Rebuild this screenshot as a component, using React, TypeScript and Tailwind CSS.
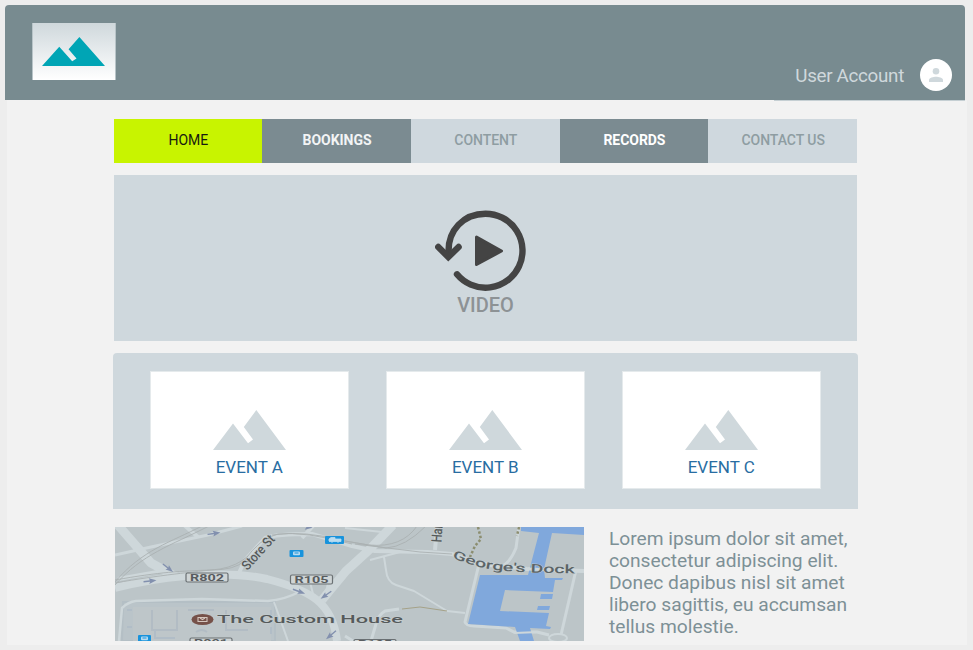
import React from "react";

function Mountains({ className, fill }: { className: string; fill: string }) {
  return (
    <svg viewBox="0 0 73 40" preserveAspectRatio="none" className={className} fill={fill}>
      <path d="M0 40 L20 13.5 L35 33.3 L40 29.5 L30.8 17 L43.3 0 L73 40 Z" />
    </svg>
  );
}

function VideoIcon() {
  return (
    <svg viewBox="435 210 91 82" className="h-[82px] w-[91px]" fill="none" stroke="#444444" strokeWidth="6.4" strokeLinecap="round">
      <path d="M448.7 254 C447 230 464 213.7 485.5 213.7 A37 37 0 1 1 457 274.3" />
      <path d="M438.3 247 L448.3 257 L458.6 247" strokeLinejoin="miter" />
      <path d="M476.5 237 L501.5 251 L476.5 264.5 Z" fill="#444444" strokeWidth="3" strokeLinejoin="round" />
    </svg>
  );
}

function Shield({ x, y, label }: { x: number; y: number; label: string }) {
  return (
    <g>
      <rect x={x} y={y} width="42" height="9" rx="1.5" fill="#cfd5d6" stroke="#6a7073" strokeWidth="1.2" />
      <text x={x + 21} y={y + 7.6} textAnchor="middle" textLength="34" lengthAdjust="spacingAndGlyphs" fontSize="8.6" fontWeight="700" fill="#585c5f">
        {label}
      </text>
    </g>
  );
}

function Stop({ x, y, w }: { x: number; y: number; w: number }) {
  return (
    <g>
      <rect x={x} y={y} width={w} height="7" rx="1" fill="#1893dc" />
      <rect x={x + w / 2 - 3.5} y={y + 1.5} width="7" height="3.7" rx="1" fill="#b9dcf0" />
      <path d={`M${x + w / 2 - 2} ${y + 3} h4`} stroke="#1893dc" strokeWidth="1" />
    </g>
  );
}

function Arrow({ x, y, angle }: { x: number; y: number; angle: number }) {
  return (
    <path
      transform={`translate(${x} ${y}) rotate(${angle})`}
      d="M-6.5 -0.7 L0 -0.7 L-1 -2.8 L6.5 0 L-1 2.8 L0 0.7 L-6.5 0.7 Z"
      fill="#8290ae"
    />
  );
}

function StreetMap() {
  return (
    <svg viewBox="115 527 469 114" className="h-[114px] w-[469px] shrink-0 overflow-hidden" fontFamily="Roboto, sans-serif">
      <rect x="115" y="527" width="469" height="114" fill="#bcc5c8" />

      {/* Custom House grounds */}
      <path d="M122 641 L123 602 L275 602 L275 641 Z" fill="#bac4c9" stroke="#b4bfc5" strokeWidth="2" />
      <path d="M133 607 H271 V641 H133 Z" fill="#bec6c9" />
      <path d="M152 610 V630 H177 V610 M226 610 V630 H248 M188 610 H214 M196 632 Q202 628 207 632" fill="none" stroke="#b2bcc4" strokeWidth="2" />
      <path d="M127 610 H132 M127 627 H132 M271 610 V617 M271 627 V634 M155 630 V638 H175" fill="none" stroke="#b1bdc7" strokeWidth="2" />

      {/* Streets */}
      <g fill="none" stroke="#ced7da" strokeLinejoin="round">
        <path d="M115 588 C142 581 160 578 185 576 C220 573 245 574 267 579 Q302 588 317 600 Q334 614 337 641" strokeWidth="8" />
        <path d="M117 524 L151 563 Q164 570 176 577" strokeWidth="9" />
        <path d="M322 600 L346 571 L368 551 L393 525" strokeWidth="9" />
        <path d="M115 555 L151 547 L208 535 L242 526" strokeWidth="3" />
        <path d="M118 579 L163 571 M184 525 L198 537" strokeWidth="4" />
        <path d="M238 575 L245 560 L265 538 Q276 534 312 534 L352 546 L375 551 L427 552 L452 554 L478 563 L527 569 L584 571" strokeWidth="4" />
        <path d="M302 538 L313 526 M435 550 L437 526" strokeWidth="4" />
        <path d="M119 641 L122 608 Q128 602 136 601 L202 599 L268 601 Q284 600 301 591" strokeWidth="2.5" />
        <path d="M274 602 L288 641 M310 582 L313 594 M328 583 L325 597" strokeWidth="2" />
        <path d="M370 560 L400 552 M384 557 L386 570 Q387 582 396 585 L414 591 L447 611 L465 613 M345 528 L382 532" strokeWidth="2" />
        <path d="M399 609 L385 611 Q378 615 376 624 L371 641 M345 636 L353 641" strokeWidth="3" />
        <path d="M519 526 L516 548 Q510 563 501 567 L479 564 L465 622 Q466 626 474 626 L506 628 L514 632 L537 632 L549 635" strokeWidth="3" />
        <path d="M576 570 L561 635" strokeWidth="3" />
        <ellipse cx="558" cy="638" rx="9" ry="4" strokeWidth="2" />
      </g>

      {/* Rail lines */}
      <g fill="none" stroke="#aab1b2" strokeWidth="0.9">
        <path d="M115 582 C142 550 171 542 202 526" />
        <path d="M115 585 C142 554 170 546 209 526" />
        <path d="M115 580 C160 572 181 571 211 570 Q235 570 244 561 Q260 538 278 534 Q304 531 352 544" />
        <path d="M115 583 C160 575 193 572 220 569 Q237 566 248 556" />
        <path d="M272 535 Q304 530 345 541 L386 548 Q405 547 426 526" />
        <path d="M345 541 L369 545 Q402 548 417 526 M355 544 L420 552 L452 554" />
      </g>

      {/* Docks */}
      <g fill="#80a8dc">
        <path d="M521 527 H584 V535 L552 533 L544 569 L545 578 L563 578 L562 580 H555 L553 592 L505 590 L500 611 L549 613 L546 626 L551 627 L550 629 L530 628 L534 641 H520 L515 627 L468 624 L480 575 L528 575 L539 533 L521 531 Z" />
        <path d="M541 594 H553 L552 599 H540 Z M538 606 H550 L549 610 H537 Z" />
      </g>
      <path d="M528 569 L584 571" stroke="#ced7da" strokeWidth="3" />
      <path d="M508 629 L515 633 L538 632" fill="none" stroke="#ced7da" strokeWidth="2" />

      {/* Footpaths */}
      <path d="M478 527 L481 539 L475 546 L470 557 M519 527 L517 536" fill="none" stroke="#8c8e70" strokeWidth="2.5" strokeDasharray="2.5 2" />
      <path d="M402 609 L420 607 L447 611" fill="none" stroke="#a5a288" strokeWidth="1" />

      <Arrow x={214} y={533.5} angle={-8} />
      <Arrow x={168} y={568} angle={38} />
      <Arrow x={150} y={581} angle={-6} />
      <Arrow x={299} y={591.5} angle={20} />
      <Arrow x={326} y={595} angle={145} />
      <Arrow x={331} y={635} angle={140} />
      <Arrow x={310} y={526} angle={145} />

      <Stop x={289.5} y={550} w={14} />
      <Stop x={138} y={635} w={13} />
      <rect x="325" y="536" width="19" height="8" rx="1" fill="#1893dc" />
      <path d="M329 541 V539 L331 537.5 H335 V539 H341 V541.5 H329 M331 542 h2 M337 542 h2" fill="#b9dcf0" stroke="#b9dcf0" strokeWidth="0.8" />

      <Shield x={186} y={573} label="R802" />
      <Shield x={290.5} y={575} label="R105" />
      <Shield x={190} y={638} label="R801" />
      <Shield x={354} y={639.5} label="R105" />

      <ellipse cx="202.5" cy="619.5" rx="11" ry="5.5" fill="#765149" />
      <path d="M198 617.5 H207 V621.5 H198 Z M200 618 L202.5 619.5 L205 618" stroke="#d4c6be" strokeWidth="1.1" fill="none" />
      <g fill="#555a5b" stroke="#c5cdcf" strokeWidth="1.2" paintOrder="stroke">
        <text x="217" y="623" fontSize="11.5" fontWeight="500" textLength="186" lengthAdjust="spacingAndGlyphs">The Custom House</text>
        <text transform="translate(247.5 571) rotate(-48)" fontSize="13.5" fontWeight="500" textLength="42" lengthAdjust="spacingAndGlyphs">Store St</text>
        <text transform="translate(441.5 542.5) rotate(-86)" fontSize="14.5" fontWeight="500" textLength="20" lengthAdjust="spacingAndGlyphs">Han</text>
      </g>
      <path id="dock-label" d="M452 557.5 Q476 568 500 570.5 Q526 573 580 573.5" fill="none" />
      <text fontSize="12" fontWeight="500" fill="#5b6467" stroke="#c5cdcf" strokeWidth="0.8" paintOrder="stroke">
        <textPath href="#dock-label" textLength="125" lengthAdjust="spacingAndGlyphs">George's Dock</textPath>
      </text>
    </svg>
  );
}

const navigation = [
  { label: "HOME", style: "bg-[#c8f400] text-[#171b10]" },
  { label: "BOOKINGS", style: "bg-[#7b8b91] font-bold text-[#f2f4f5]" },
  { label: "CONTENT", style: "bg-[#cfd8de] font-medium text-[#8e9da2]" },
  { label: "RECORDS", style: "bg-[#7b8b91] font-bold text-white" },
  { label: "CONTACT US", style: "bg-[#cfd8de] font-medium text-[#8e9da2]" },
];

export default function App() {
  return (
    <div className="h-[650px] w-[973px] overflow-hidden bg-[#ededed] pt-[5px] font-['Roboto',sans-serif]">
      <header className="ml-[5px] flex h-[95px] w-[960px] items-start justify-between rounded-t-[4px] bg-[#788b90]">
        <div className="ml-[27px] mt-[18px] flex h-[57px] w-[84px] justify-center border-x border-[#b8c4c8] bg-linear-to-b from-[#cfd8dc] to-white pr-[2px] pt-[14px]">
          <Mountains className="h-[29px] w-[63px]" fill="#00a5b5" />
        </div>
        <div className="mr-[13px] mt-[54px] flex h-8 items-center gap-4">
          <span className="pt-[2px] text-[18.8px] leading-8 tracking-[-0.3px] text-[#cfd8dc]">User Account</span>
          <span className="flex size-8 items-center justify-center rounded-full bg-white">
            <svg viewBox="0 0 14 14" className="size-[14px]" fill="#cfd8dc">
              <circle cx="7" cy="3.3" r="3.3" />
              <path d="M0 14 V12 C0 9.7 4.5 8.7 7 8.7 S14 9.7 14 12 V14 Z" />
            </svg>
          </span>
        </div>
      </header>

      <main className="ml-[7px] h-[545px] w-[960px] bg-[#f2f2f2]">
        <div className="ml-[767px] h-px w-[191px] bg-[#c5cfd3]" />
        <nav className="ml-[106.5px] mt-[18px] grid h-11 w-[743.5px] grid-cols-5">
          {navigation.map(({ label, style }) => (
            <a key={label} className={`flex items-center justify-center pb-[2px] pl-px text-[14px] tracking-[-0.05px] ${style}`}>
              {label}
            </a>
          ))}
        </nav>

        <section className="ml-[106.5px] mt-3 flex h-[166px] w-[743px] flex-col items-center bg-[#cfd8dd] pt-[35px]">
          <div className="mr-[8.5px]"><VideoIcon /></div>
          <span className="mt-px pl-px text-[20px] leading-6 font-medium text-[#8d9295]">VIDEO</span>
        </section>

        <section className="ml-[105.5px] mt-3 flex h-[156px] w-[745px] gap-[37.5px] rounded-t-[4px] bg-[#cfd8dd] pl-[37.5px] pt-[18px]">
          {["EVENT A", "EVENT B", "EVENT C"].map((name) => (
            <div key={name} className="flex h-[118px] w-[198.5px] flex-col items-center border border-[#e5eaec] bg-white pt-[38px]">
              <Mountains className="h-10 w-[73px]" fill="#cfd8dc" />
              <span className="mt-[5px] text-[17px] leading-6 text-[#286da2]">{name}</span>
            </div>
          ))}
        </section>

        <section className="ml-[108px] mt-[18px] flex h-[114px] gap-[25px]">
          <StreetMap />
          <p className="whitespace-nowrap pt-px text-[19.2px] leading-[22px] text-[#7d9096]">
            Lorem ipsum dolor sit amet,<br />
            consectetur adipiscing elit.<br />
            Donec dapibus nisl sit amet<br />
            libero sagittis, eu accumsan<br />
            tellus molestie.
          </p>
        </section>
      </main>
    </div>
  );
}
